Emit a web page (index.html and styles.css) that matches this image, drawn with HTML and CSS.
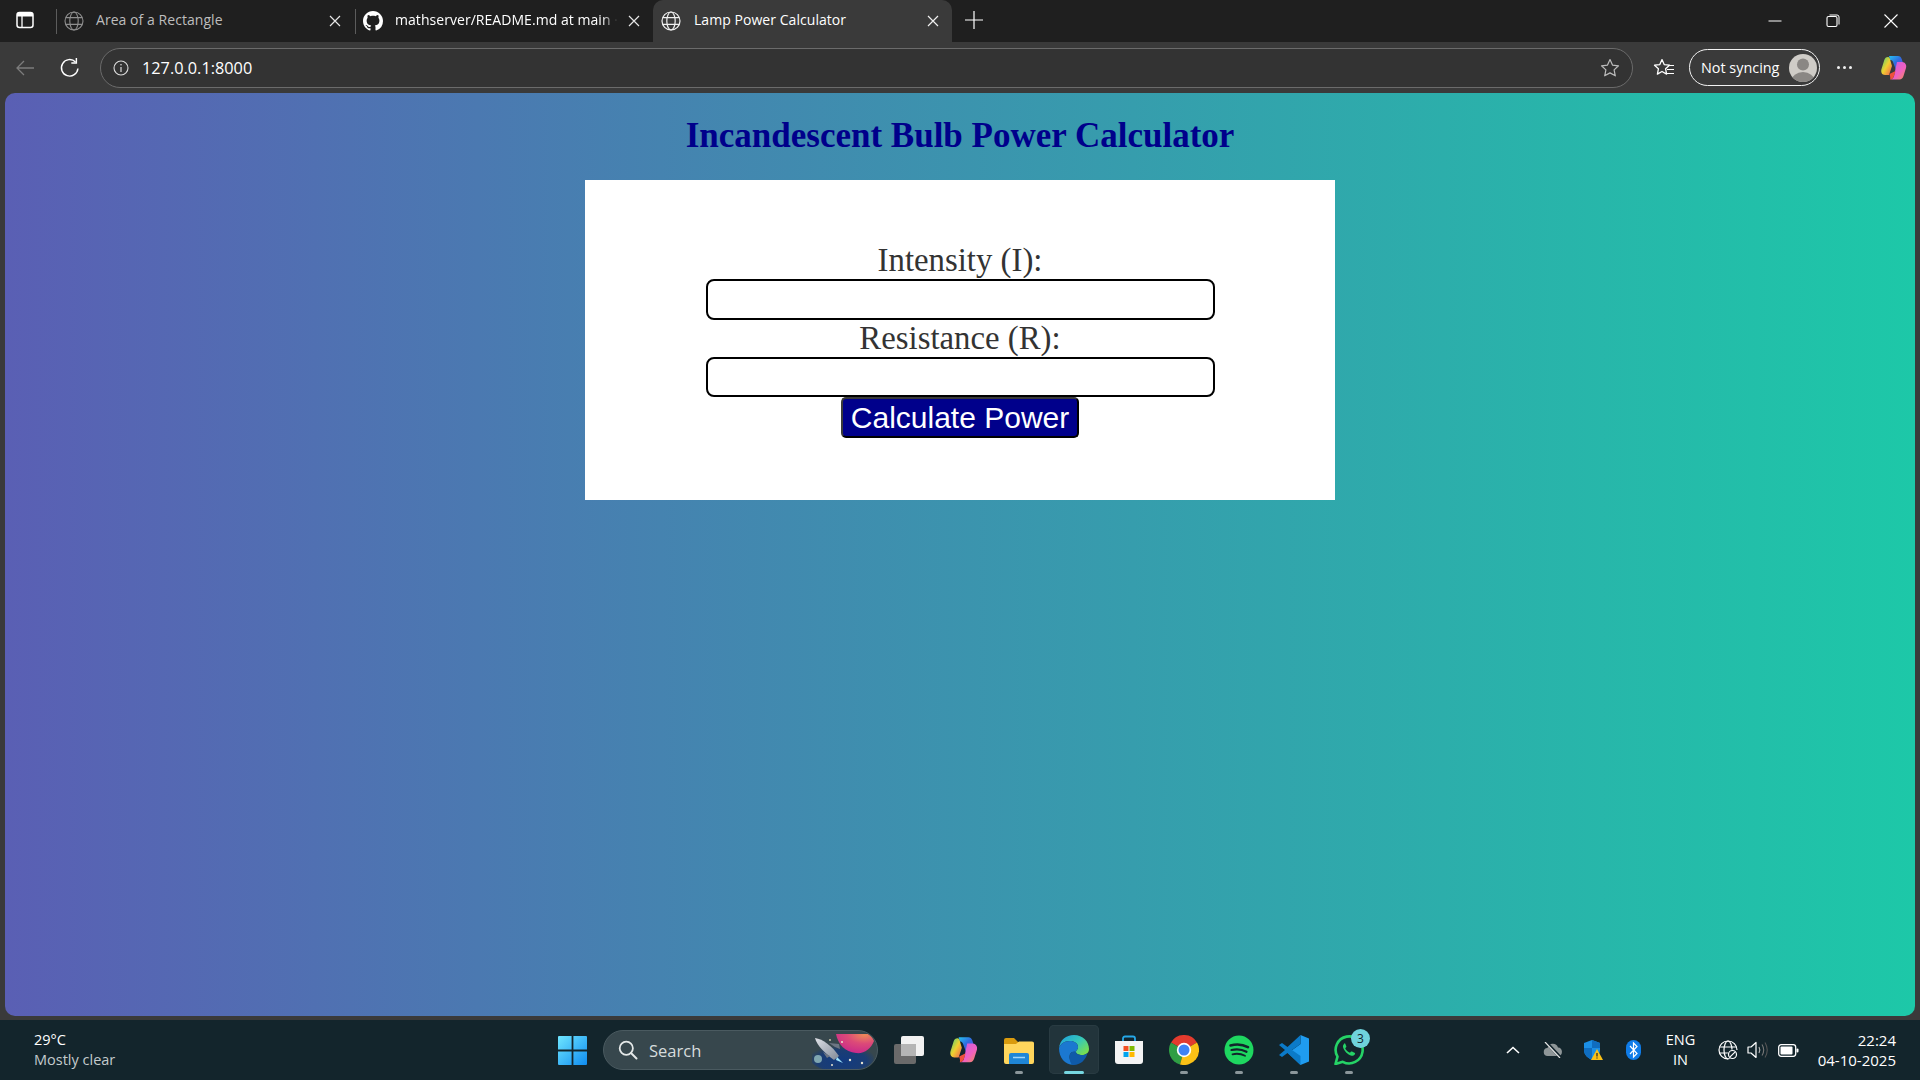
FILE: index.html
```html
<!DOCTYPE html>
<html lang="en">
<head>
<meta charset="utf-8">
<title>Lamp Power Calculator</title>
<link rel="stylesheet" href="styles.css">
</head>
<body>
<header class="tabstrip">
  <svg class="sidebar-icon" viewBox="0 0 18 18" width="18" height="18"><rect x="1" y="1.500" width="16" height="15" rx="2.500" fill="none" stroke="#fff" stroke-width="1.500"/><path d="M1 5.500h16V4a2.500 2.500 0 0 0-2.500-2.500h-11A2.500 2.500 0 0 0 1 4z" fill="#fff"/><path d="M6 5v11" stroke="#fff" stroke-width="1.300"/></svg>
  <div class="tab tab-one">
    <svg class="fav dim" viewBox="0 0 20 20" width="20" height="20"><g fill="none" stroke="currentColor" stroke-width="1.100"><circle cx="10" cy="10" r="9"/><ellipse cx="10" cy="10" rx="4.200" ry="9"/><path d="M1.800 6.600h16.400M1.800 13.400h16.400"/></g></svg>
    <span class="tab-title dim-text">Area of a Rectangle</span>
    <svg class="x" viewBox="0 0 12 12" width="12" height="12"><path d="M1 1l10 10M11 1L1 11" stroke="#e6e6e6" stroke-width="1.200"/></svg>
  </div>
  <div class="tab tab-two">
    <svg class="fav" viewBox="0 0 16 16" width="20" height="20"><path fill="#fff" d="M8 0C3.58 0 0 3.58 0 8c0 3.54 2.29 6.53 5.47 7.59.4.07.55-.17.55-.38 0-.19-.01-.82-.01-1.49-2.01.37-2.53-.49-2.69-.94-.09-.23-.48-.94-.82-1.130-.28-.15-.68-.52-.01-.53.63-.01 1.080.58 1.230.82.72 1.210 1.870.87 2.330.66.07-.52.28-.87.51-1.070-1.780-.2-3.640-.89-3.640-3.950 0-.87.31-1.590.82-2.150-.08-.2-.36-1.020.08-2.120 0 0 .67-.21 2.200.82.64-.18 1.320-.27 2-.27s1.360.09 2 .27c1.530-1.040 2.200-.82 2.200-.82.44 1.100.16 1.920.08 2.120.51.56.82 1.270.82 2.150 0 3.070-1.870 3.750-3.650 3.950.29.25.54.73.54 1.480 0 1.070-.01 1.930-.01 2.200 0 .21.15.46.55.38A8.010 8.010 0 0 0 16 8c0-4.420-3.580-8-8-8z"/></svg>
    <span class="tab-title fade">mathserver/README.md at main ·</span>
    <svg class="x" viewBox="0 0 12 12" width="12" height="12"><path d="M1 1l10 10M11 1L1 11" stroke="#e6e6e6" stroke-width="1.200"/></svg>
  </div>
  <div class="tab tab-active">
    <svg class="fav" viewBox="0 0 20 20" width="20" height="20"><g fill="none" stroke="#f0f0f0" stroke-width="1.200"><circle cx="10" cy="10" r="9"/><ellipse cx="10" cy="10" rx="4.200" ry="9"/><path d="M1.800 6.600h16.400M1.800 13.400h16.400"/></g></svg>
    <span class="tab-title">Lamp Power Calculator</span>
    <svg class="x" viewBox="0 0 12 12" width="12" height="12"><path d="M1 1l10 10M11 1L1 11" stroke="#f0f0f0" stroke-width="1.200"/></svg>
  </div>
  <svg class="plus" viewBox="0 0 18 18" width="18" height="18"><path d="M9 0v18M0 9h18" stroke="#fff" stroke-width="1.200"/></svg>
  <div class="window-controls">
    <svg viewBox="0 0 14 14" width="14" height="14"><path d="M0.500 7h13" stroke="#fff" stroke-width="1"/></svg>
    <svg viewBox="0 0 14 14" width="14" height="14"><rect x="1" y="2.500" width="10" height="10" rx="1.500" fill="none" stroke="#fff" stroke-width="1.100"/><path d="M3.500 1h7.500a2 2 0 0 1 2 2v7.500" fill="none" stroke="#fff" stroke-width="1"/></svg>
    <svg viewBox="0 0 14 14" width="14" height="14"><path d="M0.500 0.500l13 13M13.500 0.500l-13 13" stroke="#fff" stroke-width="1.100"/></svg>
  </div>
</header>

<nav class="toolbar">
  <svg class="back" viewBox="0 0 20 20" width="20" height="20"><path d="M19 10H2M9 3l-7 7 7 7" fill="none" stroke="#7c7c7c" stroke-width="1.300"/></svg>
  <svg class="reload" viewBox="0 0 20 20" width="22" height="22"><path d="M17.200 10.500A7.500 7.500 0 1 1 15 4.500" fill="none" stroke="#fff" stroke-width="1.300"/><path d="M15.800 0.800v4.600h-4.600" fill="none" stroke="#fff" stroke-width="1.300"/></svg>
  <div class="address">
    <svg viewBox="0 0 16 16" width="16" height="16"><circle cx="8" cy="8" r="7" fill="none" stroke="#dcdcdc" stroke-width="1.100"/><path d="M8 7v5" stroke="#dcdcdc" stroke-width="1.200"/><circle cx="8" cy="4.800" r=".8" fill="#dcdcdc"/></svg>
    <span class="url">127.0.0.1:8000</span>
    <svg class="star" viewBox="0 0 20 20" width="20" height="20"><path d="M10 1.600l2.500 5.500 6 .7-4.400 4.100 1.200 5.900L10 14.900l-5.300 2.900 1.200-5.900L1.500 7.800l6-.7z" fill="none" stroke="#bdbdbd" stroke-width="1.200" stroke-linejoin="round"/></svg>
  </div>
  <svg class="favs" viewBox="0 0 22 20" width="22" height="20"><path d="M9 1.600l2.200 5 5.300.6-3.900 3.600 1 5.300L9 13.500l-4.600 2.600 1-5.300L1.500 7.200l5.300-.6z" fill="none" stroke="#fff" stroke-width="1.300" stroke-linejoin="round"/><path d="M15 7.500h6M14 11.500h7M12.500 15.500h8.500" stroke="#fff" stroke-width="1.200"/></svg>
  <div class="sync">
    <span>Not syncing</span>
    <svg viewBox="0 0 28 28" width="28" height="28"><defs><clipPath id="av"><circle cx="14" cy="14" r="14"/></clipPath></defs><g clip-path="url(#av)"><rect width="28" height="28" fill="#cfccc7"/><circle cx="14" cy="10.500" r="6" fill="#8a8784"/><ellipse cx="14" cy="27" rx="11.500" ry="9" fill="#8a8784"/></g></svg>
  </div>
  <div class="dots"><i></i><i></i><i></i></div>
  <svg class="copilot-top" viewBox="0 0 28 28" width="28" height="28"><use href="#copilot-shape"/></svg>
</nav>

<main class="page">
  <h1>Incandescent Bulb Power Calculator</h1>
  <form class="card">
    <label for="i">Intensity (I):</label>
    <input id="i" type="text">
    <label for="r">Resistance (R):</label>
    <input id="r" type="text">
    <button type="button">Calculate Power</button>
  </form>
</main>

<footer class="taskbar">
  <div class="weather">
    <span class="temp">29°C</span>
    <span class="cond">Mostly clear</span>
  </div>
  <svg class="winlogo" viewBox="0 0 29 29" width="29" height="29"><defs><linearGradient id="wl" x1="0" y1="0" x2="1" y2="1"><stop offset="0" stop-color="#6fe6ff"/><stop offset="1" stop-color="#0f8cf0"/></linearGradient></defs><path fill="url(#wl)" d="M0 1a1 1 0 0 1 1-1h12.600v13.600H0zM15.400 0H28a1 1 0 0 1 1 1v12.600H15.400zM0 15.400h13.600V29H1a1 1 0 0 1-1-1zM15.400 15.400H29V28a1 1 0 0 1-1 1H15.400z"/></svg>
  <div class="search">
    <svg viewBox="0 0 20 20" width="20" height="20"><circle cx="8.300" cy="8.300" r="6.600" fill="none" stroke="#e4e8e8" stroke-width="1.800"/><path d="M13 13l5.500 5.500" stroke="#e4e8e8" stroke-width="2" stroke-linecap="round"/></svg>
    <span>Search</span>
    <svg class="rocket" viewBox="0 0 66 40" width="66" height="40"><defs><radialGradient id="pl" cx=".75" cy=".05" r="1"><stop offset="0" stop-color="#ee8a58"/><stop offset=".45" stop-color="#dc4a78"/><stop offset="1" stop-color="#c8288c"/></radialGradient><radialGradient id="sky" cx=".5" cy=".6" r=".55"><stop offset="0" stop-color="#123a80"/><stop offset=".7" stop-color="#123a80" stop-opacity=".75"/><stop offset="1" stop-color="#123a80" stop-opacity="0"/></radialGradient><linearGradient id="rk" x1="0" y1="0" x2="1" y2="1"><stop offset="0" stop-color="#dfe2e8"/><stop offset="1" stop-color="#7f8896"/></linearGradient></defs><ellipse cx="30" cy="28" rx="32" ry="14" fill="url(#sky)"/><path d="M24 4h32c3 2 5 4 6 7-3 8-10 13-18 12-11-1-18-9-20-19z" fill="url(#pl)"/><path d="M3 8c8 1 17 8 24 18l-5 4C14 24 5 16 3 8z" fill="url(#rk)"/><path d="M17 13l10 1 1 5-5-2zM11 22l7 4-3 2z" fill="#6d7684"/><path d="M25 27l6 6-7-3z" fill="#9fe6ff"/><circle cx="6" cy="29" r="4" fill="#7fa6b0"/><circle cx="20" cy="35" r="1" fill="#e8e4d0"/><circle cx="38" cy="30" r="1.200" fill="#e8e4d0"/><circle cx="50" cy="33" r="1.200" fill="#e8e4d0"/><circle cx="18" cy="10" r="1" fill="#c8c4a8"/><circle cx="30" cy="12" r="1" fill="#e8e4d0"/></svg>
  </div>
  <svg class="taskview" viewBox="0 0 30 28" width="30" height="28"><rect x="0" y="8" width="22" height="20" rx="2" fill="#6a6a6a"/><rect x="7" y="0" width="23" height="20" rx="2" fill="#f2f2f2"/><rect x="7" y="8" width="15" height="12" fill="#b5b5b5"/></svg>
  <div class="apps">
    <div class="app">
      <svg viewBox="0 0 28 28" width="30" height="30"><defs><linearGradient id="cp1" x1="0" y1="0" x2="1" y2="1"><stop offset="0" stop-color="#26c2f0"/><stop offset=".45" stop-color="#2f6de0"/><stop offset="1" stop-color="#7b3fd8"/></linearGradient><linearGradient id="cp2" x1="0" y1="0" x2="1" y2="1"><stop offset="0" stop-color="#3fd07a"/><stop offset=".5" stop-color="#f0d030"/><stop offset="1" stop-color="#f05a50"/></linearGradient><linearGradient id="cp3" x1="0" y1="0" x2="1" y2="1"><stop offset="0" stop-color="#c45ae8"/><stop offset=".6" stop-color="#f060c0"/><stop offset="1" stop-color="#f09050"/></linearGradient><g id="copilot-shape"><path d="M9 2h9c2 0 3 1 3.700 3L24 12l-8 4-3-8c-.5-1.400-1.500-2-3-2z" fill="url(#cp1)"/><path d="M8 3c-2 0-3 1-3.700 3L1.500 15c-1 3 .5 6 3.500 6H9l3-9-1.500-5C10 5 9.500 3 8 3z" fill="url(#cp2)"/><path d="M17 8h5c3 0 5 3 4 6l-2.500 8c-.7 2-2 3.500-4 3.500H10c2 0 3.200-1.200 4-3.500z" fill="url(#cp3)"/><path d="M10 25.500c2 0 3.200-1.200 4-3.500l1.500-5-6 3 .5 2c.3 1.500.5 2.500 0 3.500z" fill="#f0503c"/></g></defs><use href="#copilot-shape"/></svg>
    </div>
    <div class="app">
      <svg viewBox="0 0 30 30" width="30" height="30"><path d="M0 5a2 2 0 0 1 2-2h8l4 4H28a2 2 0 0 1 2 2v4H0z" fill="#d99b0e"/><path d="M0 9h12l3-2.500h13a2 2 0 0 1 2 2V27a2 2 0 0 1-2 2H2a2 2 0 0 1-2-2z" fill="#ffd65c"/><path d="M5 20a2 2 0 0 1 2-2h16a2 2 0 0 1 2 2v9H5z" fill="#1f86d6"/><path d="M9 22.500h12" stroke="#9fd6fa" stroke-width="1.500"/></svg>
      <i class="pip"></i>
    </div>
    <div class="app app-active">
      <svg viewBox="0 0 30 30" width="30" height="30"><defs><linearGradient id="e1" x1="0" y1="0" x2="1" y2=".8"><stop offset="0" stop-color="#1b9de2"/><stop offset=".55" stop-color="#36c8b8"/><stop offset="1" stop-color="#7ce04a"/></linearGradient></defs><path d="M15 0c9 0 15 6.500 15 14 0 4-3.500 6-7 6-3 0-6-1-6-3 0-2 2-2 2-5 0-3.500-3.500-6-8-6C5 6 1.500 9 0 13 1 5 7 0 15 0z" fill="url(#e1)"/><path d="M0 13c1.500-4 5-7 11-7 4.500 0 8 2.500 8 6 0 3-2 3-2 5-4-1-6.500 1-6.500 5 0 3 1.800 5.800 4.500 7.700C6 30 0 23 0 13z" fill="#1b78d0"/><path d="M10.500 22c0-4 2.500-6 6.500-5 0 2 3 3 6 3 2 0 4-.5 5.500-2C27 25 21 30 15 30c-1 0-1.500 0-2-.3-1.500-1.500-2.500-4.700-2.500-7.700z" fill="#0f5aa8"/></svg>
      <i class="pip pip-active"></i>
    </div>
    <div class="app">
      <svg viewBox="0 0 30 30" width="30" height="30"><path d="M9 8V3.500C9 2 10 1.500 11 1.500h8c1 0 2 .5 2 2V8" fill="none" stroke="#25a8e8" stroke-width="1.800"/><path d="M1 6h28v20a3 3 0 0 1-3 3H4a3 3 0 0 1-3-3z" fill="#f4f4f4"/><path d="M9.500 11h5v5h-5z" fill="#f25022"/><path d="M15.500 11h5v5h-5z" fill="#7fba00"/><path d="M9.500 17h5v5h-5z" fill="#00a4ef"/><path d="M15.500 17h5v5h-5z" fill="#ffb900"/></svg>
    </div>
    <div class="app">
      <svg viewBox="0 0 30 30" width="30" height="30"><path d="M15 15L2 7.500A15 15 0 0 1 28 7.500z" fill="#e33b2e"/><path d="M15 15l-13-7.500A15 15 0 0 0 11 29.500z" fill="#2f9e44"/><path d="M15 15L28 7.500A15 15 0 0 1 11 29.500z" fill="#fbc116"/><circle cx="15" cy="15" r="7.200" fill="#fff"/><circle cx="15" cy="15" r="5.500" fill="#3f83f5"/></svg>
      <i class="pip"></i>
    </div>
    <div class="app">
      <svg viewBox="0 0 30 30" width="30" height="30"><circle cx="15" cy="15" r="14.500" fill="#1ed760"/><g fill="none" stroke="#12242c" stroke-linecap="round"><path d="M6.500 10.500c6-1.700 12.500-1 17.500 1.700" stroke-width="2.600"/><path d="M7.500 15c5-1.300 10.500-.7 15 1.800" stroke-width="2.200"/><path d="M8.500 19.300c4.300-1 8.700-.5 12.500 1.500" stroke-width="1.800"/></g></svg>
      <i class="pip"></i>
    </div>
    <div class="app">
      <svg viewBox="0 0 30 30" width="30" height="30"><path d="M21.500 0L30 3.500v23L21.500 30 9 18l12.500-9z" fill="#1f9cf0"/><path d="M21.500 0L8.500 12 3 8 0 10l6 5-6 5 3 2 5.500-4L21.500 30V21L13 15l8.500-6z" fill="#0b7ac8"/></svg>
      <i class="pip"></i>
    </div>
    <div class="app">
      <svg viewBox="0 0 30 30" width="30" height="30"><path d="M1.500 29l2-7.300A13.500 13.500 0 1 1 8.800 26.800z" fill="none" stroke="#25d366" stroke-width="2.600" stroke-linejoin="round"/><path d="M10.500 8.500c-1 .7-1.800 2-1.500 3.500.7 3.500 4.800 8 8.500 8.800 1.500.3 3-.5 3.500-1.800.3-.7 0-1-.5-1.300l-2.500-1.200c-.5-.2-.9-.1-1.200.3l-.8 1c-2-.7-4-2.600-4.800-4.500l.9-1c.3-.3.4-.7.2-1.100l-1-2.400c-.2-.6-.8-.8-1.300-.3z" fill="#25d366"/></svg>
      <span class="badge">3</span>
      <i class="pip"></i>
    </div>
  </div>
  <div class="tray">
    <svg class="t-chev" viewBox="0 0 14 8" width="14" height="8"><path d="M1 7l6-5.500L13 7" fill="none" stroke="#fff" stroke-width="1.600"/></svg>
    <svg class="t-cloud" viewBox="0 0 20 16" width="20" height="16"><path d="M5 14a4 4 0 0 1-.5-8A5.500 5.500 0 0 1 15 5.500a4.300 4.300 0 0 1 .5 8.500z" fill="#8e9698"/><path d="M3 0l15 16" stroke="#12242c" stroke-width="3"/><path d="M2 0l15 16" stroke="#e8e8e8" stroke-width="1.200"/></svg>
    <svg class="t-shield" viewBox="0 0 20 20" width="20" height="20"><path d="M9 0l8 3v7c0 5-4 8-8 10-4-2-8-5-8-10V3z" fill="#1b8fe6"/><path d="M9 0l8 3v5H9v12C5 18 1 15 1 10V8h8z" fill="#0f6dc0"/><path d="M14 9l6 11H8z" fill="#fbc116"/><path d="M14 13v3.500M14 17.500v1" stroke="#222" stroke-width="1.200"/></svg>
    <svg class="t-bt" viewBox="0 0 15 20" width="15" height="20"><rect width="15" height="20" rx="7.500" fill="#0f7ce8"/><path d="M4 6l7 7.500-3.500 3.500v-14L11 6.500 4 14" fill="none" stroke="#fff" stroke-width="1.200"/></svg>
    <div class="lang"><span>ENG</span><span>IN</span></div>
    <svg class="t-globe" viewBox="0 0 20 20" width="20" height="20"><g fill="none" stroke="#fff" stroke-width="1.200"><path d="M10 19a9 9 0 1 1 9-9"/><ellipse cx="10" cy="10" rx="4" ry="9"/><path d="M1.500 7h17M1.500 13h9"/></g><circle cx="14.500" cy="14.500" r="5" fill="#12242c"/><circle cx="14.500" cy="14.500" r="4" fill="none" stroke="#fff" stroke-width="1.200"/><path d="M11.800 17.200l5.400-5.400" stroke="#fff" stroke-width="1.200"/></svg>
    <svg class="t-vol" viewBox="0 0 21 18" width="21" height="18"><path d="M1 6h3l5-4.500v15L4 12H1z" fill="none" stroke="#fff" stroke-width="1.200" stroke-linejoin="round"/><path d="M12 6c1 1.800 1 4.200 0 6" fill="none" stroke="#bbb" stroke-width="1.100"/><path d="M15 3.500c2 3.200 2 7.800 0 11" fill="none" stroke="#777" stroke-width="1.100"/><path d="M18 1.500c2.700 4.500 2.700 10.500 0 15" fill="none" stroke="#555" stroke-width="1.100"/></svg>
    <svg class="t-bat" viewBox="0 0 21 13" width="21" height="13"><rect x=".7" y=".7" width="17" height="11.600" rx="2.500" fill="none" stroke="#fff" stroke-width="1.300"/><rect x="2.500" y="2.500" width="12" height="8" rx="1" fill="#fff"/><rect x="18.500" y="4.500" width="2" height="4" rx="1" fill="#fff"/></svg>
    <div class="clock"><span>22:24</span><span>04-10-2025</span></div>
  </div>
</footer>
</body>
</html>
```

FILE: styles.css
```css
* { box-sizing: border-box; }
html, body { margin: 0; height: 100%; }
body {
  width: 1920px;
  height: 1080px;
  overflow: hidden;
  display: flex;
  flex-direction: column;
  background: #3a3a3a;
  font-family: "Open Sans", "Noto Sans", sans-serif;
  color: #fff;
}
svg { display: block; flex: none; }

/* tab strip */
.tabstrip {
  height: 42px;
  flex: none;
  display: flex;
  align-items: stretch;
  background: #1f1f1f;
}
.sidebar-icon { margin: 11px 0 0 16px; }
.tab {
  display: flex;
  align-items: center;
  font-size: 14px;
}
.tab-one { width: 299px; margin-left: 22px; padding: 0 14px 0 8px; position: relative; }
.tab-two { width: 298px; padding: 0 13px 0 8px; position: relative; }
.tab-one::before, .tab-two::before {
  content: "";
  position: absolute;
  left: 0;
  top: 9px;
  bottom: 8px;
  width: 1px;
  background: #5c5c5c;
}
.tab-active {
  width: 299px;
  padding: 0 13px 0 8px;
  background: #3a3a3a;
  border-radius: 10px 10px 0 0;
}
.fav { margin-right: 12px; }
.dim { color: #8e8e8e; }
.dim-text { color: #bdbdbd; }
.tab-title {
  flex: 1;
  margin-bottom: 4px;
  white-space: nowrap;
  letter-spacing: 0.05px;
}
.tab-active .fav { margin-right: 13px; }
.fade {
  margin-right: 8px;
  -webkit-mask-image: linear-gradient(to right, #000 92%, transparent 99%);
  mask-image: linear-gradient(to right, #000 92%, transparent 99%);
}
.plus { margin: 11px 0 0 13px; }
.window-controls {
  margin-left: auto;
  display: flex;
  gap: 44px;
  align-items: center;
  padding-right: 22px;
}

/* toolbar */
.toolbar {
  height: 51px;
  flex: none;
  display: flex;
  align-items: center;
  background: #3a3a3a;
}
.back { margin-left: 15px; }
.reload { margin-left: 24px; }
.address {
  margin-left: 19px;
  width: 1533px;
  height: 40px;
  margin-top: 1px;
  display: flex;
  align-items: center;
  padding: 0 12px 0 12px;
  background: #333;
  border: 1.5px solid #6b6b6b;
  border-radius: 20px;
}
.url { margin-left: 13px; font-size: 16.3px; color: #fff; }
.star { margin-left: auto; }
.favs { margin-left: 20px; }
.sync {
  margin-left: 14px;
  width: 131px;
  height: 37px;
  display: flex;
  align-items: center;
  justify-content: space-between;
  padding: 0 2px 0 11px;
  border: 1.5px solid #f2f2f2;
  border-radius: 19px;
  font-size: 14.4px;
  white-space: nowrap;
}
.dots {
  margin-left: 17px;
  display: flex;
  gap: 3px;
}
.dots i { width: 3px; height: 3px; border-radius: 50%; background: #f0f0f0; }
.copilot-top { margin-left: 28px; }

/* page */
.page {
  width: 1910px;
  height: 923px;
  flex: none;
  margin-left: 5px;
  border-radius: 10px;
  background: linear-gradient(90deg, #5a5fb4, #1dc8a8);
  display: flex;
  flex-direction: column;
  align-items: center;
  padding-top: 23px;
  font-family: "Liberation Serif", "Times New Roman", serif;
}
h1 {
  margin: 0 0 24px;
  height: 40px;
  font-size: 35px;
  line-height: 40px;
  font-weight: 700;
  color: #00008b;
}
.card {
  width: 750px;
  height: 320px;
  padding-top: 62px;
  background: #fff;
  display: flex;
  flex-direction: column;
  align-items: center;
}
label {
  font-size: 32.8px;
  line-height: 37px;
  color: #333;
}
input {
  width: 509px;
  height: 40.5px;
  margin-left: 1px;
  border: 2px solid #000;
  border-radius: 8px;
  background: #fff;
  flex: none;
}
button {
  width: 238px;
  height: 41px;
  padding: 0;
  background: #00008b;
  color: #fff;
  border: 2px solid;
  border-color: #3a3a3a #000 #000 #3a3a3a;
  border-radius: 5px;
  font-family: "Liberation Sans", Arial, sans-serif;
  font-size: 30px;
  line-height: 36px;
}

/* taskbar */
.taskbar {
  margin-top: 4px;
  height: 60px;
  flex: none;
  display: flex;
  align-items: center;
  background: #13252c;
}
.weather {
  width: 524px;
  margin-left: 34px;
  display: flex;
  flex-direction: column;
  font-size: 14.5px;
  line-height: 20px;
  flex: none;
}
.cond { color: #c3cbcd; }
.search {
  margin-left: 16px;
  width: 275px;
  height: 40px;
  display: flex;
  align-items: center;
  padding-left: 14px;
  background: #37474d;
  border: 1px solid #4a5a60;
  border-radius: 20px;
  font-size: 16.5px;
  color: #d6dcdc;
  overflow: hidden;
}
.search span { margin-left: 11px; }
.rocket { margin-left: auto; margin-right: -1px; }
.taskview { margin-left: 16px; }
.apps {
  margin-left: 12.5px;
  display: flex;
  align-self: stretch;
}
.app {
  position: relative;
  width: 50px;
  height: 49px;
  margin: 5px 2.5px 0;
  padding-top: 10px;
  display: flex;
  flex-direction: column;
  align-items: center;
  border-radius: 5px;
}
.app-active { background: #22343b; box-shadow: inset 0 0 0 1px #293b42; }
.pip {
  margin-top: 6px;
  width: 8px;
  height: 3px;
  border-radius: 2px;
  background: #8b979b;
}
.pip-active { width: 20px; background: #76d6e0; }
.badge {
  position: absolute;
  top: 4px;
  right: 4px;
  width: 19px;
  height: 19px;
  border-radius: 50%;
  background: #6fd3dc;
  color: #12242c;
  font-size: 12px;
  line-height: 19px;
  text-align: center;
}
.tray {
  margin-left: 1px;
  display: flex;
  align-items: center;
  flex: 1;
}
.t-chev { margin-left: 128px; }
.t-cloud { margin-left: 23px; }
.t-shield { margin-left: 20px; }
.t-bt { margin-left: 23px; }
.lang {
  width: 48px;
  margin-left: 16px;
  display: flex;
  flex-direction: column;
  align-items: center;
  font-size: 14.5px;
  line-height: 20px;
}
.t-globe { margin-left: 13px; }
.t-vol { margin-left: 9px; }
.t-bat { margin-left: 10px; }
.clock {
  margin-left: auto;
  padding-right: 24px;
  display: flex;
  flex-direction: column;
  align-items: flex-end;
  font-size: 15px;
  line-height: 20px;
}
```
